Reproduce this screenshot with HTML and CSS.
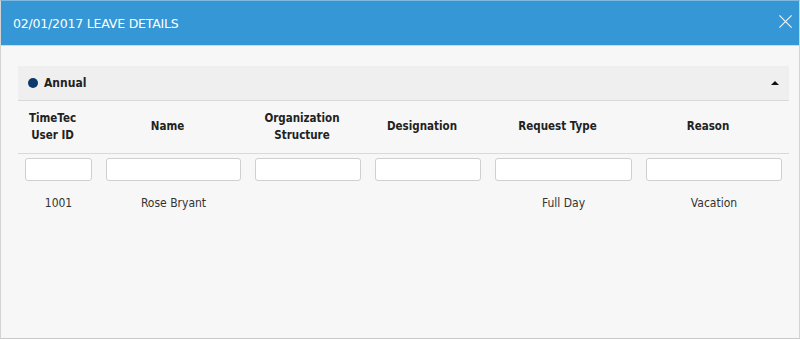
FILE: index.html
```html
<!DOCTYPE html>
<html lang="en">
<head>
  <meta charset="UTF-8" />
  <title>Leave Details</title>
  <link rel="stylesheet" href="styles.css">
</head>
<body>
  <div class="modal">
    <div class="modal-header">
      <span class="modal-title">02/01/2017 LEAVE DETAILS</span>
      <button class="close-btn" title="Close">
        <svg viewBox="0 0 16 16"><path d="M1.5 1.5L14.5 14.5M14.5 1.5L1.5 14.5"/></svg>
      </button>
    </div>
    <div class="modal-body">
      <div class="panel">
        <div class="panel-heading">
          <span class="dot"></span>
          <span class="panel-title">Annual</span>
          <span class="caret"></span>
        </div>
        <table class="leave-table">
          <colgroup>
            <col style="width:81px"><col style="width:149px"><col style="width:120px">
            <col style="width:120px"><col style="width:151px"><col>
          </colgroup>
          <thead>
            <tr class="head-row">
              <th>TimeTec<br>User ID</th>
              <th>Name</th>
              <th>Organization<br>Structure</th>
              <th>Designation</th>
              <th>Request Type</th>
              <th>Reason</th>
            </tr>
            <tr class="filter-row">
              <td><input type="text"></td>
              <td><input type="text"></td>
              <td><input type="text"></td>
              <td><input type="text"></td>
              <td><input type="text"></td>
              <td><input type="text"></td>
            </tr>
          </thead>
          <tbody>
            <tr class="data-row">
              <td>1001</td>
              <td>Rose Bryant</td>
              <td></td>
              <td></td>
              <td>Full Day</td>
              <td>Vacation</td>
            </tr>
          </tbody>
        </table>
      </div>
    </div>
  </div>
</body>
</html>
```

FILE: styles.css
```css
* { box-sizing: border-box; }
html, body { margin: 0; padding: 0; background: #fff; }
body { font-family: "DejaVu Sans Condensed", "DejaVu Sans", sans-serif; font-size: 12px; color: #333; }

.modal { width: 800px; height: 339px; border: 1px solid #d4d4d4; border-top-color: #7fb8e0; border-bottom-color: #c8c8c8; background: #f7f7f7; display: flex; flex-direction: column; }
.modal-header { height: 45px; flex-shrink: 0; background: #3597d5; border-bottom: 1px solid #d8d8d8; display: flex; align-items: center; justify-content: space-between; padding: 0 4px 0 12px; }
.modal-title { font-family: "DejaVu Sans", sans-serif; font-size: 12.5px; color: #fff; letter-spacing: -0.2px; }
.close-btn { background: none; border: none; padding: 0; width: 20px; height: 20px; cursor: pointer; display: flex; align-items: center; justify-content: center; margin-bottom: 3px; }
.close-btn svg { width: 15px; height: 15px; stroke: #e8f3fb; stroke-width: 1.3; fill: none; }

.modal-body { padding: 20px 9px 0 17px; }
.panel { width: 771px; }
.panel-heading { height: 35px; background: #efefef; border-bottom: 1px solid #d9d9d9; display: flex; align-items: center; padding: 0 10px; }
.dot { width: 10px; height: 10px; border-radius: 50%; background: #0c3a6a; margin-right: 6px; }
.panel-title { font-weight: bold; color: #222; flex: 1; }
.caret { width: 0; height: 0; border-left: 4px solid transparent; border-right: 4px solid transparent; border-bottom: 4px solid #111; }

.leave-table { width: 100%; border-collapse: collapse; table-layout: fixed; }
.head-row th { height: 52px; font-size: 11.5px; font-weight: bold; color: #222; text-align: center; line-height: 17px; padding: 0 12px 0 0; border-bottom: 1px solid #d9d9d9; }
.filter-row td { padding: 4px 7px 0 7px; }
.filter-row input { width: 100%; height: 23px; border: 1px solid #cfcfcf; border-radius: 3px; background: #fff; display: block; }
.data-row td { text-align: center; height: 45px; padding-top: 1px; color: #333; }
```
